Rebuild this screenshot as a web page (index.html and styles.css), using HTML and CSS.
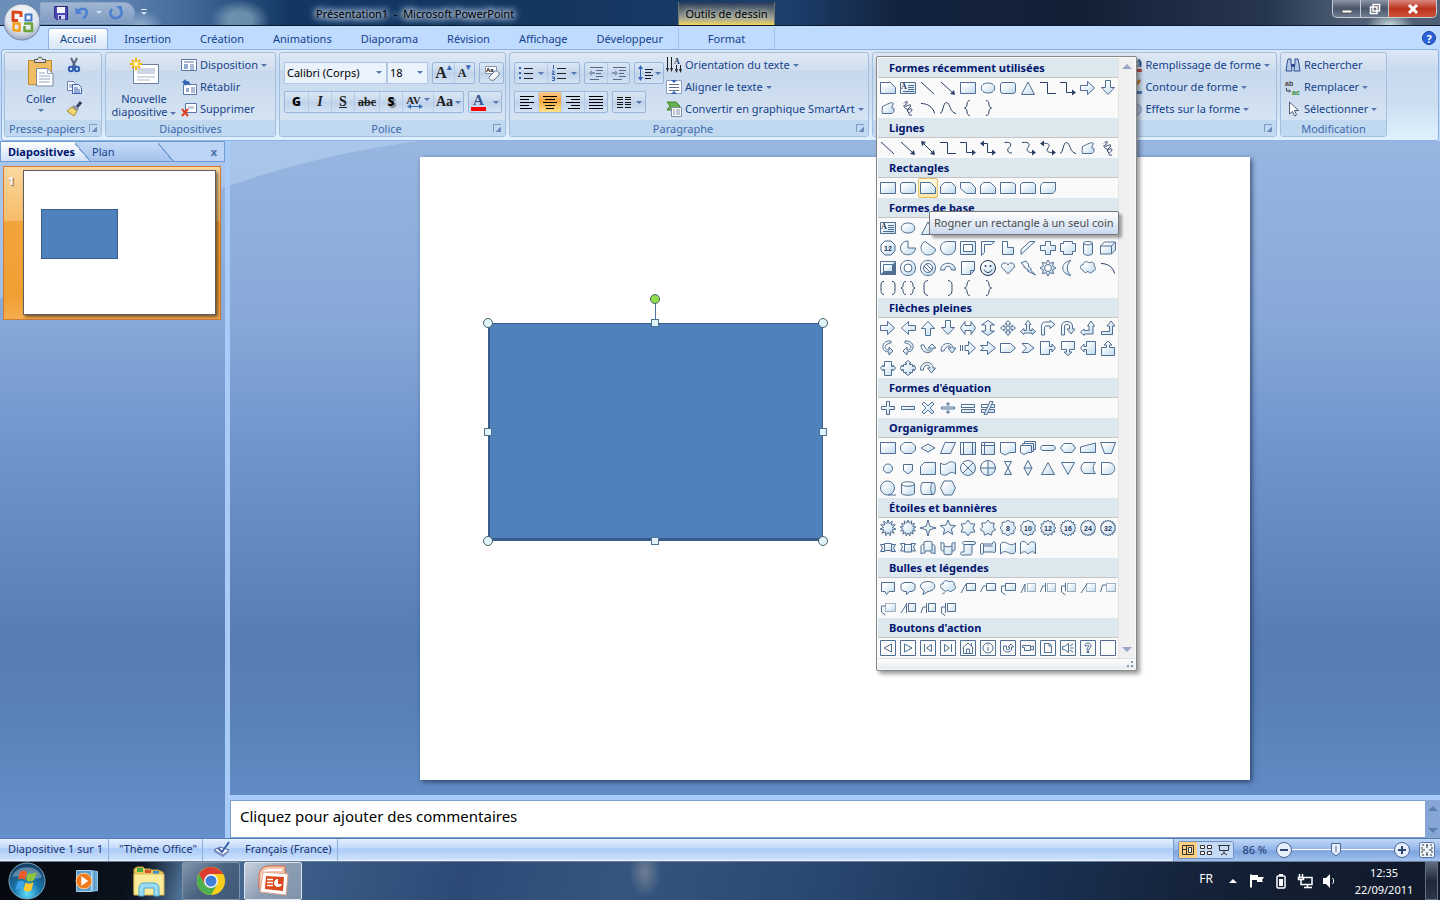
FILE: index.html
```html
<!DOCTYPE html>
<html lang="fr">
<head>
    <meta charset="UTF-8">
    <meta name="viewport" content="width=device-width, initial-scale=1.0">
    <title>Présentation1 - Microsoft PowerPoint</title>
    <link rel="stylesheet" href="styles.css">
</head>
<body>
    <header class="titlebar">
        <button class="office-button" aria-label="Bouton Office">
            <svg viewBox="0 0 38 38" width="38" height="38">
                <defs>
                    <radialGradient id="orb" cx=".5" cy=".35" r=".7">
                        <stop offset="0" stop-color="#fff"/><stop offset=".6" stop-color="#dfe5ee"/><stop offset="1" stop-color="#8d9db8"/>
                    </radialGradient>
                </defs>
                <circle cx="19" cy="19" r="18" fill="url(#orb)" stroke="#7388a8"/>
                <g fill="none" stroke-width="3" stroke-linejoin="round">
                    <path d="M18 14V9.500L10 9v8.500h5" stroke="#d9481c"/>
                    <path d="M22.500 11.500h6v6h-6z" stroke="#3f78c8" stroke-width="2"/>
                    <path d="M10.500 20.500h6V28l-6-1z" stroke="#f2a11f" stroke-width="2.500"/>
                    <path d="M21 20.500h8v7.500h-7.500v-5" stroke="#6aa53a" stroke-width="2.500"/>
                </g>
            </svg>
        </button>
        <div class="quick-access">
            <button aria-label="Enregistrer"><svg viewBox="0 0 16 16" width="16" height="16"><path d="M1.500 1.500h13v13h-11l-2-2z" fill="#4b49b8" stroke="#2b2a80"/><path d="M4 2h8v6H4z" fill="#f4f6ff"/><path d="M5 10h7v4.500H5z" fill="#d0d4ee"/><path d="M6 11h2v3H6z" fill="#2b2a80"/></svg></button>
            <button aria-label="Annuler"><svg viewBox="0 0 16 16" width="16" height="16"><path d="M4 6c5-4 10-2 8.500 3-.5 2-2 3.500-3.500 4.500" fill="none" stroke="#4b7fd0" stroke-width="2.500"/><path d="M1.500 2v7h7z" fill="#4b7fd0"/></svg></button>
            <i class="caret light"></i>
            <button aria-label="Répéter"><svg viewBox="0 0 16 16" width="16" height="16"><path d="M4 4c-4 5 0 10 5 9 5-1 6-6 3-9" fill="none" stroke="#4b7fd0" stroke-width="2.500"/><path d="M8 1h6v6z" fill="#4b7fd0"/></svg></button>
        </div>
        <button class="qa-more" aria-label="Personnaliser"><i class="caret light barred"></i></button>
        <h1 class="window-title">Présentation1 &nbsp;- &nbsp;Microsoft PowerPoint</h1>
        <span class="context-title">Outils de dessin</span>
        <div class="window-buttons">
            <button aria-label="Réduire"><svg viewBox="0 0 12 12" width="12" height="12"><path d="M1 7h10v3H1z" fill="#fff" stroke="#555"/></svg></button>
            <button aria-label="Restaurer"><svg viewBox="0 0 12 12" width="12" height="12"><path d="M4 1.500h6.500V8H4zM1.500 4H8v6.500H1.500z" fill="#667" stroke="#fff" stroke-width="1.500"/></svg></button>
            <button class="close" aria-label="Fermer"><svg viewBox="0 0 12 12" width="12" height="12"><path d="M2 2l8 8M10 2l-8 8" stroke="#fff" stroke-width="3"/></svg></button>
        </div>
    </header>

    <nav class="tabs" aria-label="Ruban">
        <button class="tab active">Accueil</button>
        <button class="tab">Insertion</button>
        <button class="tab">Création</button>
        <button class="tab">Animations</button>
        <button class="tab">Diaporama</button>
        <button class="tab">Révision</button>
        <button class="tab">Affichage</button>
        <button class="tab">Développeur</button>
        <button class="tab contextual">Format</button>
        <button class="help" aria-label="Aide">?</button>
    </nav>

    <section class="ribbon">
        <div class="group clipboard">
            <div class="group-body">
                <button class="big">
                    <svg viewBox="0 0 28 32" width="28" height="32"><path d="M1.500 4.500h23v24h-23z" fill="#f0bd62" stroke="#c08a35"/><path d="M7.500 6.500v-3h3c0-3 5-3 5 0h3v3z" fill="#ddd" stroke="#555"/><path d="M9.500 12.500h11l5.500 5v12.500H9.500z" fill="#fff" stroke="#7c8aa0"/><path d="M20.500 12.500v5H26M12 17h6M12 20h11M12 23h11M12 26h11" fill="none" stroke="#93a4c4"/></svg>
                    <span>Coller</span>
                    <i class="caret"></i>
                </button>
                <div class="stack">
                    <button aria-label="Couper"><svg viewBox="0 0 16 16" width="16" height="16"><path d="M5 1l4.500 9M11 1L6.500 10" stroke="#54657f" stroke-width="2"/><circle cx="5" cy="12" r="2.200" fill="none" stroke="#2f5fb5" stroke-width="2"/><circle cx="11" cy="12" r="2.200" fill="none" stroke="#2f5fb5" stroke-width="2"/></svg></button>
                    <button aria-label="Copier"><svg viewBox="0 0 16 16" width="16" height="16"><path d="M1.500 2.500h6l2 2v7h-8z" fill="#fff" stroke="#6d83b3"/><path d="M3 6h5M3 8h5" stroke="#6d83b3"/><path d="M6.500 5.500h6l3 3v6h-9z" fill="#eef4ff" stroke="#3e62ad"/><path d="M8 9h4M8 11h6M8 13h6" stroke="#3e62ad"/></svg></button>
                    <button aria-label="Reproduire la mise en forme"><svg viewBox="0 0 16 16" width="16" height="16"><path d="M15 1l-4 5" stroke="#38466b" stroke-width="3"/><path d="M8 4l5 4-2 2-5-4z" fill="#8a90b0"/><path d="M6 6l5 4-3 5-7-5z" fill="#f1d873" stroke="#a98a2c"/></svg></button>
                </div>
            </div>
            <footer><span>Presse-papiers</span><button class="launcher" aria-label="Plus"></button></footer>
        </div>

        <div class="group slides">
            <div class="group-body">
                <button class="big">
                    <svg viewBox="0 0 32 32" width="32" height="32"><path d="M5.500 8.500h25v19h-25z" fill="#fff" stroke="#6d7f9e"/><path d="M9 12h18v6H9z" fill="#ccd5e5"/><path d="M9 21h18M9 24h13" stroke="#a9b6cd"/><path d="M8 2v12M2 8h12M4 4l8 8M12 4l-8 8" stroke="#f6b30e" stroke-width="2"/><circle cx="8" cy="8" r="2.500" fill="#fff6b0"/></svg>
                    <span>Nouvelle<br>diapositive <i class="caret"></i></span>
                </button>
                <div class="stack">
                    <button><svg viewBox="0 0 16 16" width="16" height="16"><path d="M.5 2.500h15v11H.5z" fill="#fff" stroke="#5a77a8"/><path d="M3 5h10" stroke="#5a77a8"/><path d="M3 7h4v5H3z" fill="#93abcf"/><path d="M9 8h4M9 10h4M9 12h4" stroke="#5a77a8"/></svg>Disposition <i class="caret"></i></button>
                    <button><svg viewBox="0 0 16 16" width="16" height="16"><path d="M2.500 5.500h13v10h-13z" fill="#fff" stroke="#5a77a8"/><path d="M5 9h3v4H5z" fill="#93abcf"/><path d="M10 9h4M10 11h4M10 13h4" stroke="#5a77a8"/><path d="M1 3l4-3v2c4 0 4 2 4 5-1-2-2-2-4-2v2z" fill="#2f62b8"/></svg>Rétablir</button>
                    <button><svg viewBox="0 0 16 16" width="16" height="16"><path d="M4.500 2.500h11v9h-11z" fill="#fff" stroke="#5a77a8"/><path d="M7 5h6v3H7z" fill="#c0cde3"/><path d="M1 8l6 7M7 8l-6 7" stroke="#e0401c" stroke-width="2"/></svg>Supprimer</button>
                </div>
            </div>
            <footer><span>Diapositives</span></footer>
        </div>

        <div class="group font">
            <div class="group-body rows">
                <div class="row">
                    <div class="combo">
                        <select class="font-name" aria-label="Police"><option>Calibri (Corps)</option></select>
                        <select class="font-size" aria-label="Taille"><option>18</option></select>
                    </div>
                    <div class="cluster">
                        <button class="serif grow" aria-label="Agrandir">A<sup>▴</sup></button>
                        <button class="serif shrink" aria-label="Réduire la police">A<sup>▾</sup></button>
                    </div>
                    <div class="cluster">
                        <button aria-label="Effacer la mise en forme"><svg viewBox="0 0 18 18" width="18" height="18"><path d="M2.500 2.500h11v7h-11z" fill="#fff" stroke="#8795ad"/><text x="3" y="8" class="tiny">Aa</text><path d="M6 13l6-6c2-1 5 2 4 4l-5 5c-3 1-5-1-5-3z" fill="#f3f5fa" stroke="#66748f"/></svg></button>
                    </div>
                </div>
                <div class="row">
                    <div class="cluster">
                        <button class="b">G</button>
                        <button class="serif i">I</button>
                        <button class="serif u">S</button>
                        <button class="serif strike">abc</button>
                        <button class="shadow">S</button>
                        <button class="serif spacing">AV<i class="caret"></i><svg viewBox="0 0 16 5" width="16" height="5"><path d="M0 2.500L4 0v2h8V0l4 2.500L12 5V3H4v2z" fill="#3c6bb5"/></svg></button>
                        <button class="serif case">Aa<i class="caret"></i></button>
                    </div>
                    <div class="cluster">
                        <button class="serif color"><span>A</span><i class="caret"></i></button>
                    </div>
                </div>
            </div>
            <footer><span>Police</span><button class="launcher" aria-label="Plus"></button></footer>
        </div>

        <div class="group paragraph">
            <div class="group-body">
                <div class="rows">
                    <div class="row">
                        <div class="cluster wide">
                            <button aria-label="Puces"><svg viewBox="0 0 16 16" width="16" height="16"><path d="M1 2h2v2H1zM1 7h2v2H1zM1 12h2v2H1z" fill="#2f5fae"/><path d="M6 3.500h9M6 8.500h9M6 13.500h9" stroke="#222"/></svg><i class="caret"></i></button>
                            <button aria-label="Numérotation"><svg viewBox="0 0 16 16" width="16" height="16"><path d="M2.500 0v4M1 6h2v2H1.500v1.500H4M1 12h2.500v3.500H1M1.500 13.500h2" fill="none" stroke="#2f5fae"/><path d="M6 3.500h9M6 8.500h9M6 13.500h9" stroke="#222"/></svg><i class="caret"></i></button>
                        </div>
                        <div class="cluster muted">
                            <button aria-label="Réduire le retrait"><svg viewBox="0 0 16 16" width="16" height="16"><path d="M2 2.500h13M8 5.500h7M8 8.500h5M8 11.500h7M2 14.500h9" stroke="#596a85"/><path d="M1 8l3-3v2h3v2H4v2z" fill="#8597b5"/></svg></button>
                            <button aria-label="Augmenter le retrait"><svg viewBox="0 0 16 16" width="16" height="16"><path d="M2 2.500h13M8 5.500h7M8 8.500h5M8 11.500h7M2 14.500h9" stroke="#596a85"/><path d="M7 8L4 5v2H1v2h3v2z" fill="#8597b5"/></svg></button>
                        </div>
                        <div class="cluster wide">
                            <button class="line-spacing" aria-label="Interligne"><svg viewBox="0 0 16 16" width="16" height="16"><path d="M3.500 0L6 4H4v8h2l-2.500 4L1 12h2V4H1z" fill="#3566b5"/><path d="M8 4.500h8M8 7.500h6M8 10.500h8M8 13.500h6" stroke="#222"/></svg><i class="caret"></i></button>
                        </div>
                    </div>
                    <div class="row">
                        <div class="cluster">
                            <button aria-label="Gauche"><svg viewBox="0 0 16 16" width="16" height="16"><path d="M1 2.500h14M1 5.500h9M1 8.500h14M1 11.500h9M1 14.500h12" stroke="#000"/></svg></button>
                            <button class="pressed" aria-label="Centrer"><svg viewBox="0 0 16 16" width="16" height="16"><path d="M1 2.500h14M3 5.500h10M1 8.500h14M3 11.500h10M4 14.500h8" stroke="#000"/></svg></button>
                            <button aria-label="Droite"><svg viewBox="0 0 16 16" width="16" height="16"><path d="M1 2.500h14M6 5.500h9M1 8.500h14M6 11.500h9M3 14.500h12" stroke="#000"/></svg></button>
                            <button aria-label="Justifier"><svg viewBox="0 0 16 16" width="16" height="16"><path d="M1 2.500h14M1 5.500h14M1 8.500h14M1 11.500h14M1 14.500h14" stroke="#000"/></svg></button>
                        </div>
                        <div class="cluster wide">
                            <button aria-label="Colonnes"><svg viewBox="0 0 16 16" width="16" height="16"><path d="M1 3.500h6M9 3.500h6M1 5.500h6M9 5.500h6M1 8.500h6M9 8.500h6M1 10.500h6M9 10.500h6M1 13.500h6M9 13.500h6" stroke="#111"/></svg><i class="caret"></i></button>
                        </div>
                    </div>
                </div>
                <div class="stack">
                    <button><svg viewBox="0 0 16 16" width="16" height="16"><path d="M1.500 0v12M5.500 0v12M10.500 8v6M14.500 8v6" stroke="#222"/><path d="M0 11h3l-1.500 4zM4 11h3l-1.500 4zM9 12h3l-1.500 4zM13 12h3l-1.500 4z" fill="#222"/><text x="8" y="7" class="glyph">A</text></svg>Orientation du texte <i class="caret"></i></button>
                    <button><svg viewBox="0 0 16 16" width="16" height="16"><path d="M.5 1.500h15v13H.5z" fill="#fff" stroke="#8da2c8"/><path d="M3 5.500h10M3 8.500h10M3 11.500h10" stroke="#5c6d8c"/><path d="M8 4L5 1h6zM8 12l-3 3h6z" fill="#3566b5"/></svg>Aligner le texte <i class="caret"></i></button>
                    <button><svg viewBox="0 0 16 16" width="16" height="16"><path d="M1 1h9l4 4-3 4H1l3-4z" fill="#63b04c" stroke="#40822f"/><path d="M5.500 6.500h10v9h-10z" fill="#fff" stroke="#7d8da8"/><path d="M7 9h2M10 9h4M7 11h2M10 11h4M7 13h2M10 13h4" stroke="#7d8da8"/></svg>Convertir en graphique SmartArt <i class="caret"></i></button>
                </div>
            </div>
            <footer><span>Paragraphe</span><button class="launcher" aria-label="Plus"></button></footer>
        </div>

        <div class="group drawing">
            <div class="group-body">
                <div class="stack">
                    <button><svg viewBox="0 0 16 16" width="16" height="16"><path d="M3 6l5-4 6 5-6 4z" fill="#dfe8f5" stroke="#3d5d96"/><path d="M12 3c3 1 3 4 2 7" fill="none" stroke="#3d5d96" stroke-width="2"/><path d="M0 12h16v3H0z" fill="#c0504d"/></svg>Remplissage de forme <i class="caret"></i></button>
                    <button><svg viewBox="0 0 16 16" width="16" height="16"><path d="M14 1L6 10" stroke="#c77c3c" stroke-width="3"/><path d="M0 12h16v3H0z" fill="#4f81bd"/></svg>Contour de forme <i class="caret"></i></button>
                    <button><svg viewBox="0 0 16 16" width="16" height="16"><path d="M3 3h9l3 3v5l-3 3H6l-3-3z" fill="#b9c8e2" stroke="#7f95be"/></svg>Effets sur la forme <i class="caret"></i></button>
                </div>
            </div>
            <footer><span></span><button class="launcher" aria-label="Plus"></button></footer>

            <div class="gallery" role="menu" aria-label="Formes">
                <div class="gallery-main">
                    <div class="gallery-list" id="galleryList"></div>
                    <div class="gallery-scroll"><i class="up"></i><i class="down"></i></div>
                </div>
                <div class="gallery-grip">
                    <svg viewBox="0 0 8 8" width="8" height="8"><path d="M5 1h2v2H5zM1 5h2v2H1zM5 5h2v2H5z" fill="#8a97a8"/></svg>
                </div>
            </div>
            <div class="tooltip" role="tooltip">Rogner un rectangle à un seul coin</div>
        </div>

        <div class="group editing">
            <div class="group-body">
                <div class="stack">
                    <button><svg viewBox="0 0 16 16" width="16" height="16"><path d="M3 2h3v3l1 9H1l1-7zM10 2h3l1 5 1 7H9l1-9z" fill="#b5c8ea" stroke="#2c4f8f"/><path d="M6 7h4v3H6z" fill="#2c4f8f"/></svg>Rechercher</button>
                    <button><svg class="replace-icon" viewBox="0 0 16 16" width="16" height="16"><text x="0" y="7" class="swap">ab</text><text x="7" y="16" class="swap green">ac</text><path d="M1.500 9v3H5M4 10.500L5.500 12 4 13.500" fill="none" stroke="#345"/></svg>Remplacer <i class="caret"></i></button>
                    <button><svg viewBox="0 0 16 16" width="16" height="16"><path d="M4.500 1v12l3-2.500 2 4.500 2-1-2-4.500h4z" fill="#fff" stroke="#4b5a78"/></svg>Sélectionner <i class="caret"></i></button>
                </div>
            </div>
            <footer><span>Modification</span></footer>
        </div>
    </section>

    <main class="workspace">
        <svg class="swoosh" viewBox="0 0 420 160" width="420" height="160"><path d="M0 0H420Q200 28 0 158Z"/></svg>
        <aside class="outline">
            <div class="outline-tabs">
                <button class="outline-tab current">Diapositives</button>
                <button class="outline-tab">Plan</button>
                <button class="outline-close" aria-label="Fermer le volet">x</button>
            </div>
            <div class="thumb">
                <span class="thumb-number">1</span>
                <div class="thumb-slide"><div class="thumb-shape"></div></div>
            </div>
        </aside>
        <div class="editor">
            <div class="canvas">
                <div class="slide">
                    <div class="selection">
                        <span class="stem"></span>
                        <span class="handle rotate"></span>
                        <span class="handle round nw"></span>
                        <span class="handle north"></span>
                        <span class="handle round ne"></span>
                        <span class="handle west"></span>
                        <span class="handle east"></span>
                        <span class="handle round sw"></span>
                        <span class="handle south"></span>
                        <span class="handle round se"></span>
                    </div>
                </div>
            </div>
            <div class="notes">
                <textarea aria-label="Commentaires" rows="1">Cliquez pour ajouter des commentaires</textarea>
                <div class="notes-scroll"><i class="up"></i><i class="down"></i></div>
            </div>
        </div>
    </main>

    <footer class="statusbar">
        <span class="status-item">Diapositive 1 sur 1</span>
        <span class="status-item">"Thème Office"</span>
        <span class="status-item language">
            <svg viewBox="0 0 18 16" width="18" height="16"><path d="M1 9l6-3 9 3-6 5z" fill="#fff" stroke="#4a63a0"/><path d="M1 9v2l9 5 6-5V9l-6 5z" fill="#7f95c8"/><path d="M5 7l4 4 7-10" fill="none" stroke="#3c5fae" stroke-width="2"/></svg>
            Français (France)
        </span>
        <div class="view-tools">
            <div class="views">
                <button class="pressed" aria-label="Normal"><svg viewBox="0 0 12 12" width="12" height="12"><path d="M.5 1.500h11v9H.5zM4.500 1.500v9M.5 5.500h4" fill="none" stroke="#333"/><path d="M6.500 3.500h3v5h-3z" fill="#fff" stroke="#333"/></svg></button>
                <button aria-label="Trieuse"><svg viewBox="0 0 12 12" width="12" height="12"><path d="M.5 1.500h4v3h-4zM7.500 1.500h4v3h-4zM.5 7.500h4v3h-4zM7.500 7.500h4v3h-4z" fill="#fff" stroke="#333"/></svg></button>
                <button aria-label="Diaporama"><svg viewBox="0 0 12 12" width="12" height="12"><path d="M0 1.500h12M1.500 2v4.500h9V2M6 7v3M3 11l3-2 3 2" fill="none" stroke="#333"/></svg></button>
            </div>
            <button class="zoom-value">86 %</button>
            <button class="round-btn" aria-label="Zoom arrière"><svg viewBox="0 0 16 16" width="16" height="16"><circle cx="8" cy="8" r="7.500" fill="#e6effb" stroke="#4c6594"/><path d="M4 8h8" stroke="#2c4574" stroke-width="2"/></svg></button>
            <input class="zoom-range" type="range" min="0" max="100" value="42" aria-label="Zoom">
            <button class="round-btn" aria-label="Zoom avant"><svg viewBox="0 0 16 16" width="16" height="16"><circle cx="8" cy="8" r="7.500" fill="#e6effb" stroke="#4c6594"/><path d="M4 8h8M8 4v8" stroke="#2c4574" stroke-width="2"/></svg></button>
            <button class="fit" aria-label="Ajuster"><svg viewBox="0 0 16 16" width="16" height="16"><rect x=".5" y=".5" width="15" height="15" rx="2" fill="#eef4fc" stroke="#5975a5"/><path d="M3 3h10v10H3z" fill="none" stroke="#333" stroke-dasharray="2 2"/><path d="M8 3v3M8 10v3M3 8h3M10 8h3" stroke="#333"/></svg></button>
        </div>
    </footer>

    <footer class="taskbar">
        <button class="start" aria-label="Démarrer">
            <svg viewBox="0 0 38 38" width="38" height="38">
                <defs><radialGradient id="start" cx=".5" cy=".85" r=".8"><stop offset="0" stop-color="#5fe0ff"/><stop offset=".45" stop-color="#1b78ad"/><stop offset="1" stop-color="#143f66"/></radialGradient></defs>
                <circle cx="19" cy="19" r="18" fill="url(#start)" stroke="#7fa9c2"/>
                <path d="M4 15C8 2 30 2 34 15 25 20 13 12 4 15z" fill="#fff" opacity=".3"/>
                <path d="M12 10c3-2 5-1 7 0l-2 8c-2-1-4-2-7 0z" fill="#f0592a"/>
                <path d="M20 11c3 1 5 1 9-1l-3 8c-3 2-5 2-8 0z" fill="#8cc63f"/>
                <path d="M9.500 20c3-2 5-1 7 0l-2 8c-2-1-4-2-7 0z" fill="#3fa3e8"/>
                <path d="M17.500 20.500c3 2 5 1 8-.5l-2 8c-3 2-5 2-8 0z" fill="#fdc72d"/>
            </svg>
        </button>
        <button class="task" aria-label="Lecteur Windows Media"><svg viewBox="0 0 32 32" width="28" height="28"><path d="M10 4l18 1v22l-18 1z" fill="#6ba9d3" stroke="#a8d6f0"/><path d="M7 4h17v24H7z" fill="#8fc4e6" stroke="#4f88b3"/><path d="M4 4h17v24H4z" fill="#5e9dca" stroke="#b8dff5"/><circle cx="12.500" cy="16" r="9" fill="#ee7a1c" stroke="#ffd9a8"/><path d="M9.500 10.500v11l8-5.500z" fill="#fff"/></svg></button>
        <button class="task" aria-label="Explorateur"><svg viewBox="0 0 32 32" width="32" height="32"><path d="M1 4l3-2h6l2 2h5l2 1h6l5 2v22H1z" fill="#e9c95c" stroke="#b8962f"/><path d="M4 3h6v4H4z" fill="#48a844"/><path d="M12 5h6v3h-6z" fill="#d94f31"/><path d="M20 6h6v3h-6z" fill="#3c8dd0"/><path d="M1 9h30v21H1z" fill="#fbeb9c" stroke="#d8bb57"/><path d="M6 31v-8c0-4 3-5 5-5h10c3 0 5 2 5 5v8h-5v-8H11v8z" fill="#9cdcf2" stroke="#4aa8cf"/></svg></button>
        <button class="task open" aria-label="Google Chrome">
            <svg viewBox="0 0 32 32" width="32" height="32"><circle cx="16" cy="16" r="14" fill="#f9cf1c"/><path d="M16 9h12.100A14 14 0 0 0 3.900 9l6 10.500z" fill="#dd3d31"/><path d="M3.900 9A14 14 0 0 0 16 30l6-10.500-12 0z" fill="#4caf50"/><circle cx="16" cy="16" r="7" fill="#f4f4f4"/><circle cx="16" cy="16" r="5.500" fill="#3f7fd8"/></svg>
        </button>
        <button class="task open active" aria-label="PowerPoint">
            <svg viewBox="0 0 32 32" width="32" height="32"><path d="M2 12C2 5 6 1 12 1h16v22H2z" fill="#f3c9b4" stroke="#d9663a"/><path d="M5 13c0-5 3-8 8-8h12" fill="none" stroke="#fff" stroke-width="2"/><path d="M6 7l25 2-2 21-26-3z" fill="#fff" stroke="#e0a58c"/><path d="M9 11l18 1-1 14-18-2z" fill="#d9481c"/><path d="M10 14.500h6M10 17.500h6M10 20.500h6" stroke="#fff" stroke-width="1.500"/><path d="M21 14a4 4 0 1 0 4 5h-4z" fill="#fff"/></svg>
        </button>
        <div class="tray">
            <span class="lang">FR</span>
            <button aria-label="Icônes cachées"><svg viewBox="0 0 16 16" width="16" height="16"><path d="M4 10l4-4 4 4z" fill="#fff"/></svg></button>
            <button aria-label="Centre de maintenance"><svg viewBox="0 0 16 16" width="16" height="16"><path d="M2 1.500v13" stroke="#fff" stroke-width="2"/><path d="M3 2h6v2h6l-2 3 1 2H8V7H3z" fill="#fff"/></svg></button>
            <button aria-label="Batterie"><svg viewBox="0 0 16 16" width="16" height="16"><path d="M6 1h4v2H6z" fill="#fff"/><rect x="4" y="3" width="8" height="12" rx="1" fill="none" stroke="#fff" stroke-width="1.500"/><path d="M6 6h4v7H6z" fill="#fff"/></svg></button>
            <button aria-label="Réseau"><svg viewBox="0 0 16 16" width="16" height="16"><path d="M6 4.500h9v7H4V8M7 14.500h8M10.500 12v2M2.500 1v3M5.500 1v3M1.500 4.500h5v2h-5zM4 7v4" fill="none" stroke="#fff" stroke-width="1.500"/></svg></button>
            <button aria-label="Volume"><svg viewBox="0 0 16 16" width="16" height="16"><path d="M2 5h3l4-4v14l-4-4H2z" fill="#fff"/><path d="M11.500 5c1.500 2 1.500 4 0 6" fill="none" stroke="#fff"/></svg></button>
        </div>
        <time class="clock">12:35<br>22/09/2011</time>
        <button class="show-desktop" aria-label="Afficher le bureau"></button>
    </footer>

    <svg class="defs" width="0" height="0" aria-hidden="true">
        <defs>
            <linearGradient id="shapeFill" x1="0" y1="0" x2="1" y2="1">
                <stop offset=".2" stop-color="#fff"/><stop offset="1" stop-color="#bdd9ec"/>
            </linearGradient>
        </defs>
    </svg>
    <script src="script.js"></script>
</body>
</html>
```
FILE: script.js
```js
// filled outline, open line, thin inner line, arrow head
const f = d => `<path class="f" d="${d}"/>`;
const l = d => `<path class="l" d="${d}"/>`;
const o = d => `<path class="o" d="${d}"/>`;
const h = d => `<path class="h" d="${d}"/>`;
const dots = d => `<path class="f dots" d="${d}"/>`;
const label = t => `<text class="num" x="8" y="10.500">${t}</text>`;
const frame = inner => '<path class="w" d="M.5.5h15v15H.5z"/>' + inner;

function star(points, outer, inner, text) {
    let d = '';
    for (let i = 0; i < points * 2; i++) {
        const r = i % 2 ? inner : outer;
        const a = Math.PI * i / points - Math.PI / 2;
        d += (i ? 'L' : 'M') + (8 + r * Math.cos(a)).toFixed(2) + ' ' + (8 + r * Math.sin(a)).toFixed(2);
    }
    return f(d + 'z') + (text ? label(text) : '');
}

const shapes = {
    text: f('M.5 2.500h15v11H.5z') + '<text class="glyph" x="1" y="9">A</text>' + o('M8 5.500h6M8 7.500h6M8 9.500h6M3 11.500h11'),
    line: l('M1 2l13 12'),
    arrow: l('M1 2l12 11') + h('M15 15l-5-1 4-4z'),
    doubleArrow: l('M3 3l10 10') + h('M15 15l-5-1 4-4zM1 1l5 1-4 4z'),
    rect: f('M.5 2.500h15v11H.5z'),
    oval: f('M8 3c9 0 9 10 0 10S-1 3 8 3z'),
    round: f('M3 2.500h10q2.500 0 2.500 2.500v6q0 2.500-2.500 2.500H3Q.5 13.500.5 11V5Q.5 2.500 3 2.500z'),
    altProcess: f('M4 2.500h8l3.500 3.500v4L12 13.500H4L.5 10V6z'),
    triangle: f('M8 2L14.500 14.500h-13z'),
    rightTriangle: f('M1.500 2v12.500h13z'),
    elbow: l('M0 2.500h7.500v11H16'),
    elbowArrow: l('M0 2.500h6.500v10H14') + h('M16 12.500l-4-3v6z'),
    elbowDouble: l('M2 3.500h5.500v9H14') + h('M16 12.500l-4-3v6zM0 3.500l4-3v6z'),
    curved: l('M4.500 2.500C13 1.500 11 6 9 7.500s-2 6 3 5.500'),
    curvedArrow: l('M2 2.500C10 1.500 10 5 8 7.500s-1 5.500 6 5') + h('M16 12.500l-4-3v6z'),
    curvedDouble: l('M3 3.500c7-1 7 2.500 5 4.500s-1 5 5 4.500') + h('M16 12.500l-4-3v6zM0 3.500l4-3v6z'),
    curve: l('M0 13.500c3 0 3-11 6.500-11S10 13 16 13.500'),
    freeform: f('M2.500 6.500l4-2 5-2 2 1-2 4 2.500 1v3l-2 2h-9.500l-.5-3z'),
    scribble: l('M4 3.500C8-1 8 3 5.500 5S8 6 9 5s3 0 0 3-1 2 1 1 3 1 0 3.500 1 3 2 2.500M4 5c0 4 2 3 3 4s0 3 2 4'),
    arc: l('M1 3.500c6 0 12 3 13.500 10'),
    leftBrace: l('M10 .5C5 1 9 7 4.500 8 9 9 5 15 10 15.500'),
    rightBrace: l('M6 .5c5 .5 1 6.500 5.500 7.500C7 9 11 15 6 15.500'),
    leftBracket: l('M8 .5c-4 1-4 2-4 7s0 7 4 8'),
    rightBracket: l('M8 .5c4 1 4 2 4 7s0 7-4 8'),
    bracketPair: l('M4 1.500c-3 0-3 2-3 6s0 7 3 7M12 1.500c3 0 3 2 3 6s0 7-3 7'),
    bracePair: l('M6 1.500C1 2 5 7 1 8c4 1 0 6 5 6.500M10 1.500C15 2 11 7 15 8c-4 1 0 6-5 6.500'),
    snip1: f('M.5 2.500h10l5 5v6H.5z'),
    snip2: f('M4.500 2.500h7l4 4v7H.5v-7z'),
    snipDiag: f('M.5 2.500h10l5 5v6h-9l-6-5z'),
    snipRound: f('M3.500 2.500h7l5 5v6H.5v-8z'),
    round1: f('M.5 2.500h12l3 2v9H.5z'),
    round2: f('M3 2.500h10l2.500 2v9H.5v-9z'),
    roundDiag: f('M3 2.500h12.500v8l-2.500 3H.5v-8z'),
    parallelogram: f('M5 2.500h10.500l-5 11H.5z'),
    trapezoid: f('M4.500 2.500h7l4 11H.5z'),
    diamond: f('M8 1l7 7-7 7-7-7z'),
    pentagon: f('M8 1l7 5-3 8.500H4L1 6z'),
    hexagon: f('M4 2.500h8L15.500 8 12 13.500H4L.5 8z'),
    heptagon: f('M8 1l5 2 2 6-4 5.500H5L1 9l2-6z'),
    octagon: f('M5 1.500h6L14.500 5v6L11 14.500H5L1.500 11V5z'),
    dodecagon: f('M5 1h6l4 4v6l-4 4H5l-4-4V5z') + label('12'),
    pie: f('M8 1v7h7.500C15 17 .5 17 .5 8 .5 4 4 1 8 1z'),
    chord: f('M5 1.500L15.500 9c0 4-4 6-7.500 6C1 15-2 5 5 1.500z'),
    teardrop: f('M8 1.500h7.500V8c0 9-15 9-15 0 0-4 3-6.500 7.500-6.500z'),
    frame: f('M.5 1.500h15v13H.5z') + '<path class="w" d="M3.500 4.500h9v7h-9z"/>',
    halfFrame: f('M1.500 1.500h13l-3 3h-7v8l-3 3z'),
    lShape: f('M2.500 1.500h5v6h6v7h-11z'),
    stripe: f('M10 1.500h5l-14 13v-5z'),
    cross: f('M5.500 1.500h5v4h5v5h-5v4h-5v-4h-5v-5h5z'),
    plaque: f('M3.500 1.500h9v2h3v8h-3v3h-9v-3h-3v-8h3z'),
    can: f('M3.500 3c0-2 9-2 9 0v10c0 3-9 3-9 0z') + o('M3.500 3c0 2.500 9 2.500 9 0'),
    cube: f('M.5 6l4-4h11v8l-4 4H.5z') + o('M.5 6h11v8M11.500 6l4-4'),
    bevel: '<path d="M.5 1.500h15v13H.5z" class="f"/><path d="M15.500 1.500v13H.5l3-3h9v-7z" fill="#526e90"/>' + f('M3.500 4.500h9v7h-9z'),
    donut: f('M8 .5c10 0 10 15 0 15S-2 .5 8 .5z') + '<circle class="w" cx="8" cy="8" r="4"/>',
    no: f('M8 .5c10 0 10 15 0 15S-2 .5 8 .5z') + '<circle class="w" cx="8" cy="8" r="4.500"/>' + o('M4 6l6 6M6 4l6 6'),
    blockArc: f('M.5 10C1 1 15 1 15.500 10h-4C11 5 5 5 4.500 10z'),
    fold: f('M1.500 1.500h13v9l-4 4h-9z') + o('M14 10.500h-3.500v4'),
    smiley: '<circle class="f dark" cx="8" cy="8" r="7.500"/><circle cx="5.500" cy="6" r="1" class="h"/><circle cx="10.500" cy="6" r="1" class="h"/>' + l('M4 9.500c2 4 6 4 8 0'),
    heart: f('M8 14L1.500 7C1 2 7 2 8 5c1-3 7-3 6.500 2z'),
    lightning: f('M1 3l5-2 3 4-1 1 3.500 3-1 1 5 5-8-4 1-1-5-3 1-1z'),
    sun: star(8, 8, 5) + '<circle class="w" cx="8" cy="8" r="3.500"/>',
    moon: f('M11 .5C0 2 0 14 11 15.500 6 12 6 4 11 .5z'),
    cloud: f('M3 10C-1 9 0 4 3 5c0-4 5-4 6-2 3-2 6 0 5 3 3 2 1 5-1 5-1 3-5 2-5 0-2 3-5 1-5-1z'),
    right: f('M.5 5.500h7v-4L14.500 8l-7 6.500v-4h-7z'),
    left: f('M15.500 5.500h-7v-4L1.500 8l7 6.500v-4h7z'),
    up: f('M5.500 15.500v-7h-4L8 1.500l6.500 7h-4v7z'),
    down: f('M5.500.5v7h-4L8 14.500l6.500-7h-4v-7z'),
    leftRight: f('M.5 8L5 1.500v4h6v-4L15.500 8 11 14.500v-4H5v4z'),
    upDown: f('M8 .5L14.500 5h-4v6h4L8 15.500 1.500 11h4V5h-4z'),
    quad: f('M8 .5l3 3.500H9v3h3V5l3.500 3-3.500 3V9H9v3h2l-3 3.500L5 12h2V9H4v2L.5 8 4 5v2h3V4H5z'),
    leftRightUp: f('M8 .5l3 4H9.500v6H12V8.500l3.500 3-3.500 3V13H4v1.500l-3.500-3 3.500-3v2h2.500v-6H5z'),
    bent: f('M1.500 15V6c0-3 2-4 4-4H10V.5l5 4-5 4V6H6c-1 0-1.500 1-1.500 2v7z'),
    uturn: f('M1.500 15V6c0-6 11-6 11 0v3H15l-4 5-4-5h2.500V6c0-2-5-2-5 0v9z'),
    leftUp: f('M11 1l3.500 5H13v8H4v1.500L.5 12 4 9v1.500h5V6H7.500z'),
    bentUp: f('M11 1l4 5h-2.500v8.500h-11v-3h8V6H7z'),
    curvedRight: f('M11 1C1 0 0 12 9 12v3l4-4-4-4v3C4 10 3 4 11 3z'),
    curvedLeft: f('M5 1c10-1 11 11 2 11v3l-4-4 4-4v3c5 0 6-6-2-7z'),
    curvedUp: f('M1 5c0 10 12 9 12 3h3l-4-4-4 4h3c0 3-5 4-7-3z'),
    curvedDown: f('M1 11c0-10 12-9 12-3h3l-4 5-4-5h3c0-3-5-3-7 3z'),
    striped: f('M5 5.500h3.500v-4L15.500 8l-7 6.500v-4H5z') + o('M.5 5v6M2.500 5v6'),
    notched: f('M.5 5.500h7v-4L15.500 8l-8 6.500v-4h-7L3.500 8z'),
    arrowPentagon: f('M.5 3.500h10L15.500 8l-5 4.500H.5z'),
    chevron: f('M2 3.500h6L14 8l-6 4.500H2L6.500 8z'),
    rightCallout: f('M.5 1.500h9v5H12V4l3.500 4-3.500 4V9.500H9.500v5h-9z'),
    downCallout: f('M1.500 1.500h13v8h-5V12H12l-4 3.500L4 12h2.500V9.500h-5z'),
    leftCallout: f('M15.500 1.500h-9v5H4V4L.5 8 4 12V9.500h2.500v5h9z'),
    upCallout: f('M1.500 15.500h13v-8h-5V5H12L8 1 4 5h2.500v2.500h-5z'),
    leftRightCallout: f('M4.500 1.500h7v5H13V5l2.500 3-2.500 3V9.500h-1.500v6h-7v-6H3V11L.5 8 3 5v1.500h1.500z'),
    quadCallout: f('M8 .5l3 2.500H9.500v1.500h3v2H14V5l2 3-2 3V9.500h-1.500v3h-3V13H11l-3 2.500L5 13h1.500v-.5h-3v-3H2V11L0 8l2-3v1.500h1.500v-2h3V3H5z'),
    circular: f('M.5 10C0 1 13 0 13 8h2.500L11.500 13l-4-5H10c-1-5-7-3-6.500 2z'),
    mathPlus: f('M6.500 1.500h3v5h5v3h-5v5h-3v-5h-5v-3h5z'),
    mathMinus: f('M1.500 6.500h13v3h-13z'),
    mathTimes: f('M4 2l4 4 4-4 2 2-4 4 4 4-2 2-4-4-4 4-2-2 4-4-4-4z'),
    mathDivide: f('M1.500 7h13v2h-13zM7 3h2v2H7zM7 11h2v2H7z'),
    mathEqual: f('M1.500 4.500h13v3h-13zM1.500 9.500h13v3h-13z'),
    mathNotEqual: f('M1.500 4.500h13v3h-13zM1.500 9.500h13v3h-13z') + f('M10 1.500h3l-6 13H4z'),
    decision: f('M8 4l7 4-7 4-7-4z'),
    predefined: f('M.5 2.500h15v12H.5z') + o('M3.500 3v12M12.500 3v12'),
    internal: f('M1.500 2.500h13v12h-13z') + o('M4.500 3v12M2 5.500h12'),
    document: f('M.5 2.500h15v10H10l-5 2.500-4.500-2.500z'),
    multiDocument: f('M4.500 1.500h11v8h-11z') + f('M2.500 3.500h11v8h-11z') + f('M.5 5.500h11v7H8l-4 2-3.500-2z'),
    terminator: f('M3 5.500h10c3 0 3 5 0 5H3c-3 0-3-5 0-5z'),
    preparation: f('M4 3.500h8L15.500 8 12 12.500H4L.5 8z'),
    manualInput: f('M.5 7l15-4v9.500H.5z'),
    manualOperation: f('M.5 2.500h15l-4 11h-7z'),
    connector: '<circle class="f" cx="8" cy="8.500" r="4.500"/>',
    offPage: f('M3.500 4.500h9v6L8 14l-4.500-3.500z'),
    card: f('M4.500 2.500h11v12H.5v-8z'),
    tape: f('M.5 3c2.500 2 5 2 7.500 0s5-1 7.500 0v11c-2.500-2-5-2-7.500 0s-5 1-7.500 0z'),
    summing: '<circle class="f" cx="8" cy="8" r="7.500"/>' + o('M3 3l10 10M13 3L3 13'),
    or: '<circle class="f" cx="8" cy="8" r="7.500"/>' + o('M.5 8h15M8 .5v15'),
    collate: f('M4.500 1.500h7L8 8l3.500 6.500h-7L8 8z'),
    sort: f('M8 .5L12 8l-4 7.500L4 8z') + o('M4 8h8'),
    extract: f('M8 2.500l6.500 12h-13z'),
    merge: f('M8 14.500l-6.500-12h13z'),
    storedData: f('M4 2.500h11.500c-3 3-3 8 0 11H4c-4-3-4-8 0-11z'),
    delay: f('M1.500 2.500H8c9 0 9 12 0 12H1.500z'),
    sequential: '<circle class="f" cx="7.500" cy="8" r="7"/>' + o('M8 15h8'),
    disk: f('M1.500 4c0-3 13-3 13 0v9c0 3-13 3-13 0z') + o('M1.500 4c0 3 13 3 13 0'),
    directAccess: f('M3 2.500h10c3 0 3 12 0 12H3c-3 0-3-12 0-12z') + o('M13 2.500c-3 0-3 12 0 12'),
    display: f('M4 1h8l3.500 7L12 15H4L.5 8z'),
    burst1: star(11, 8, 4.500),
    burst2: star(13, 8, 5),
    star4: star(4, 8, 2.500),
    star5: star(5, 8, 3.500),
    star6: star(6, 8, 5),
    star7: star(7, 8, 5.500),
    star8: star(8, 8, 6.500, '8'),
    star10: star(10, 8, 6.500, '10'),
    star12: star(12, 8, 6, '12'),
    star16: star(16, 8, 6.500, '16'),
    star24: star(18, 8, 6.500, '24'),
    star32: star(20, 8, 6.500, '32'),
    ribbonUp: f('M.5 4.500h4v-1h7v1h4L13.500 8l2 3.500H11v-1H5v1H.5l2-3.500z') + o('M4.500 4v6.500M11.500 4v6.500'),
    ribbonDown: f('M.5 3.500H5v1h6v-1h4.500l-2 3.500 2 4h-4v1h-7v-1h-4l2-4z') + o('M4.500 4v8M11.500 4v8'),
    curvedRibbonUp: f('M1 6c1-2 2-2 3-1V2c3-1 6-1 8 0v3c2-1 2 0 3 1v8c-1-1-2-1-4-1v-2H5v2c-2 0-3 0-4 1z') + o('M4 5v6M12 5v6'),
    curvedRibbonDown: f('M1 2c1 1 2 1 3 1v3c3 1 5 1 8 0V3c1 0 2 0 3-1v8c-1 1-2 1-3 1v3c-3 1-5 1-8 0v-3c-1 0-2 0-3-1z') + o('M4 6v5M12 6v5'),
    verticalScroll: f('M4 1.500h10c2 0 2 3 0 3h-2v8c0 2-1 2.500-2 2.500H2c-2 0-2-3 0-3h2V4c-2 0-2-2.500 0-2.500z') + o('M4 4.500h8'),
    horizontalScroll: f('M.5 5c0-2 2-2 3-1h9c0-3 3-3 3 0v7c0 2-2 2-3 1h-9c0 3-3 3-3 1z') + o('M3.500 4v8M3.500 6h9'),
    wave: f('M.5 4c5-6 9 5 15-1v9c-5 6-9-5-15 2z'),
    doubleWave: f('M.5 3c2-3 5-2 7.500 2 2-4 5-4 7.500-2v11c-2-3-4-3-7.500 0-2-3-5-3-7.500 0z'),
    rectCallout: f('M1.500 2.500h13v9H9L6.500 14.500 5 11.500H1.500z'),
    roundCallout: f('M4 2.500h8l3 2v5l-3 2H9.500l-3 3v-3H4l-3-2v-5z'),
    ovalCallout: f('M8 1.500c9 0 9 9 0 10l-5 3 1-4c-6-3-4-9 4-9z'),
    cloudCallout: f('M3 9C-1 8 0 3 3 4c0-4 5-4 6-2 3-2 6 0 5 3 3 2 1 5-1 5-1 2-4 2-5 0-2 2-5 1-5-1z') + o('M4 12v2M2 14h1'),
    line1: f('M6.500 3.500h9v7h-9z') + o('M1 13l5-9'),
    line2: f('M6.500 3.500h9v7h-9z') + o('M.5 12l3-6h3'),
    line3: f('M5.500 3.500h10v7h-10z') + o('M5.500 6h-4v6l4 3'),
    dotted1: dots('M7.500 3.500h8v8h-8z') + o('M1 13l4-9v8'),
    dotted2: dots('M7.500 3.500h8v8h-8z') + o('M.5 12l2-6h3M5.500 3v9'),
    dotted3: dots('M7.500 3.500h8v8h-8z') + o('M5.500 3v8M5.500 6h-4v6l4 3'),
    plain1: dots('M6.500 3.500h9v8h-9z') + o('M1 13l6-9'),
    plain2: dots('M6.500 3.500h9v8h-9z') + o('M.5 12l2-7h4'),
    plain3: dots('M5.500 3.500h10v8h-10z') + o('M5.500 6h-4v6l4 3'),
    accent1: f('M8.500 3.500h7v8h-7z') + o('M1 13l5-8M6.500 3v10'),
    accent2: f('M8.500 3.500h7v8h-7z') + o('M1 13l2-6h3M6.500 3v10'),
    accent3: f('M7.500 3.500h8v8h-8z') + o('M5.500 3v10M5.500 7h-4v6l4 3'),
    back: frame(o('M11.500 4v8L4 8z')),
    forward: frame(o('M4.500 4v8L12 8z')),
    begin: frame(o('M11.500 4.500v7L6.500 8zM4.500 4v8')),
    end: frame(o('M4.500 4.500v7l5-3.500zM11.500 4v8')),
    home: frame(o('M2.500 8L8 3l5.500 5M3.500 7.500v6h9v-6M6.500 13V9h3v4M11.500 6V3')),
    info: frame('<circle class="o" cx="8" cy="8" r="5"/>' + o('M8 7v4M8 4.500v1')),
    back2: frame(o('M3.500 6v3c0 4 8 4 8 0V7h2L11 4 8 7h1.500v2c0 1-3 1-3 0V6z')),
    movie: frame(o('M2.500 5.500h8v5h-6v-3h-2zM10.500 7l3-1v4l-3-1')),
    page: frame(o('M4.500 3.500h5l2 2v7h-7zM9 4v2h2')),
    sound: frame(o('M2.500 6.500h2l4-3v9l-4-3h-2zM10 6l3-2M10.500 8h3M10 10l3 2')),
    help: frame(o('M5 6c0-4 6-4 6 0 0 2-2 2-2 4H7c0-3 2-3 2-4s-2-1-2 0zM7 11.500h2v1H7z')),
    blank: frame('')
};

const sections = [
    ['Formes récemment utilisées', 'snip1 text line arrow rect oval round triangle elbow elbowArrow right down freeform scribble arc curve leftBrace rightBrace'],
    ['Lignes', 'line arrow doubleArrow elbow elbowArrow elbowDouble curved curvedArrow curvedDouble curve freeform scribble'],
    ['Rectangles', 'rect round snip1 snip2 snipDiag snipRound round1 round2 roundDiag'],
    ['Formes de base', 'text oval triangle rightTriangle parallelogram trapezoid diamond pentagon hexagon heptagon octagon octagon dodecagon pie chord teardrop frame halfFrame lShape stripe cross plaque can cube bevel donut no blockArc fold smiley heart lightning sun moon cloud arc bracketPair bracePair leftBracket rightBracket leftBrace rightBrace'],
    ['Flèches pleines', 'right left up down leftRight upDown quad leftRightUp bent uturn leftUp bentUp curvedRight curvedLeft curvedUp curvedDown striped notched arrowPentagon chevron rightCallout downCallout leftCallout upCallout leftRightCallout quadCallout circular'],
    ["Formes d'équation", 'mathPlus mathMinus mathTimes mathDivide mathEqual mathNotEqual'],
    ['Organigrammes', 'rect altProcess decision parallelogram predefined internal document multiDocument terminator preparation manualInput manualOperation connector offPage card tape summing or collate sort extract merge storedData delay sequential disk directAccess display'],
    ['Étoiles et bannières', 'burst1 burst2 star4 star5 star6 star7 star8 star10 star12 star16 star24 star32 ribbonUp ribbonDown curvedRibbonUp curvedRibbonDown verticalScroll horizontalScroll wave doubleWave'],
    ['Bulles et légendes', 'rectCallout roundCallout ovalCallout cloudCallout line1 line2 line3 dotted1 dotted2 dotted3 plain1 plain2 plain3 accent1 accent2 accent3'],
    ["Boutons d'action", 'back forward begin end home info back2 movie page sound help blank']
];

document.getElementById('galleryList').innerHTML = sections.map(([title, names]) => `
    <h2>${title}</h2>
    <div class="shape-grid">
        ${names.split(' ').map(name => {
            const hover = title === 'Rectangles' && name === 'snip1' ? ' hover' : '';
            return `<button class="shape${hover}" aria-label="${name}"><svg viewBox="0 0 16 16" width="16" height="16">${shapes[name]}</svg></button>`;
        }).join('')}
    </div>
`).join('');
```
FILE: styles.css
```css
* {
    box-sizing: border-box;
}

body {
    margin: 0;
    height: 100vh;
    display: flex;
    flex-direction: column;
    overflow: hidden;
    font-family: "Noto Sans", "Open Sans", sans-serif;
    font-size: 11px;
    line-height: 16px;
    color: #15428b;
    background-color: #bfdbff;
}

button {
    font: inherit;
    color: inherit;
    background: none;
    border: 0;
    padding: 0;
    white-space: nowrap;
}

svg {
    display: block;
    flex: none;
}

h1,
h2 {
    margin: 0;
    font-size: inherit;
    font-weight: normal;
}

.caret {
    display: inline-block;
    flex: none;
    border: 3px solid transparent;
    border-top-color: #5577ab;
    border-bottom: 0;
    vertical-align: middle;
}

.caret.light {
    border-top-color: #cfdcf0;
}

.caret.barred {
    position: relative;
}

.caret.barred::before {
    content: "";
    position: absolute;
    left: -3px;
    top: -6px;
    width: 6px;
    height: 1px;
    background-color: #dfe8f6;
}

/* Title bar */
.titlebar {
    position: relative;
    z-index: 3;
    flex: none;
    display: flex;
    align-items: center;
    height: 26px;
    padding-left: 40px;
    border-bottom: 1px solid #0d1a2e;
    background:
        radial-gradient(ellipse 30px 20px at 240px 20px, rgba(150, 185, 205, 0.6) 40%, transparent),
        radial-gradient(ellipse 24px 16px at 140px 26px, rgba(190, 215, 235, 0.6), transparent),
        radial-gradient(ellipse 24px 14px at 1390px 26px, rgba(220, 240, 235, 0.9), transparent),
        linear-gradient(90deg, #6c8fba 0, #5f83b0 8%, #3d6594 14%, #123763 20%, #14365f 40%, #1c3f6c 55%, #13233f 62%, #131f35 75%, #27364f 88%, #4f6076 94%, #4f6076 100%);
}

.office-button {
    position: absolute;
    left: 3px;
    top: 3px;
}

.quick-access {
    display: flex;
    align-items: center;
    gap: 5px;
    height: 22px;
    padding: 0 10px 0 12px;
    border: 1px solid #8ba6cb;
    border-radius: 0 12px 12px 0;
    background: linear-gradient(#a0b5d2, #7f9bc2);
}

.quick-access .caret {
    margin: 0 1px;
}

.qa-more {
    padding: 0 6px;
}

.window-title {
    position: absolute;
    left: 316px;
    top: 5px;
    line-height: 18px;
    color: #000;
    text-shadow: 0 0 5px #b5c6dc, 0 0 6px #b5c6dc, 0 0 8px #b5c6dc, 0 0 10px #b5c6dc, 0 0 10px #b5c6dc;
}

.context-title {
    position: absolute;
    left: 678px;
    top: 2px;
    width: 97px;
    height: 23px;
    line-height: 24px;
    text-align: center;
    color: #000;
    border: solid #6d7a72;
    border-width: 0 1px;
    background: linear-gradient(#24385a, #9fa392 70%, #f4d65c);
    text-shadow: 0 0 5px #c5cbc0, 0 0 8px #c5cbc0;
}

.window-buttons {
    display: flex;
    align-self: flex-start;
    height: 18px;
    margin-left: auto;
    margin-right: 3px;
    border: 1px solid #c4ccd8;
    border-top: 0;
    border-radius: 0 0 5px 5px;
    overflow: hidden;
    background: linear-gradient(#8b96a8, #4a5669 50%, #707c90);
}

.window-buttons button {
    width: 28px;
    display: flex;
    align-items: center;
    justify-content: center;
    border-right: 1px solid #c4ccd8;
}

.window-buttons .close {
    width: 47px;
    border: 0;
    background: linear-gradient(#d9897c, #bb3420 50%, #cf5237);
}

/* Tabs */
.tabs {
    flex: none;
    display: flex;
    align-items: flex-end;
    gap: 1px;
    height: 23px;
    padding-left: 48px;
    background: #bfdbff;
}

.tab {
    height: 21px;
    padding: 0 14px;
}

.tab.active {
    padding: 0 11px;
    margin-right: 1px;
    border: 1px solid #8db2e3;
    border-bottom: 0;
    border-radius: 3px 3px 0 0;
    background: linear-gradient(#fff, #e3eefb 60%, #dbe7f6);
}

.tab.contextual {
    width: 97px;
    border: solid #a9c3e6;
    border-width: 0 1px;
}

.help {
    width: 14px;
    height: 14px;
    margin: 0 4px 4px auto;
    border: 1px solid #1b3fa0;
    border-radius: 50%;
    line-height: 11px;
    font-weight: bold;
    color: #fff;
    background: #2b62d9;
}

/* Ribbon */
.ribbon {
    position: relative;
    z-index: 2;
    flex: none;
    display: flex;
    gap: 3px;
    margin: 0 1px;
    padding: 2px 2px 3px;
    border: 1px solid #8db2e3;
    border-radius: 3px;
    background: linear-gradient(#dce8f6, #c8daee 22%, #cddef1 60%, #e0f1fd);
}

.group {
    position: relative;
    flex: none;
    display: flex;
    flex-direction: column;
    border: 1px solid #a3bfdf;
    border-radius: 3px;
    background: linear-gradient(#dfe9f5, #d0deef 20%, #c7d8ed 22%, #dae8f5 100%);
}

.clipboard { width: 98px; }
.slides { width: 171px; }
.font { width: 227px; }
.paragraph { width: 360px; }
.drawing { width: 405px; }
.editing { width: 107px; }

.group-body {
    flex: 1;
    display: flex;
    padding: 1px 4px 0;
}

.group footer {
    display: flex;
    align-items: center;
    height: 16px;
    line-height: 15px;
    color: #3e6aaa;
    background: #c1d8f1;
}

.group footer span {
    flex: 1;
    text-align: center;
}

.launcher {
    width: 8px;
    height: 8px;
    margin-right: 4px;
    border: solid #7f9cc8;
    border-width: 1px 0 0 1px;
    background: linear-gradient(135deg, transparent 60%, #6b8cbd 60%);
}

.big {
    display: flex;
    flex-direction: column;
    align-items: center;
    line-height: 13px;
    padding-top: 2px;
}

.big > span {
    margin-top: 4px;
}

.big > .caret {
    margin-top: 4px;
}

.clipboard .big {
    width: 64px;
}

.clipboard .stack {
    margin-left: -7px;
}

.slides .big {
    width: 68px;
    margin-right: 3px;
}

.stack {
    display: flex;
    flex-direction: column;
}

.stack button {
    display: flex;
    align-items: center;
    gap: 3px;
    height: 22px;
}

.rows {
    display: flex;
    flex-direction: column;
    gap: 7px;
    padding-top: 9px;
}

.row {
    display: flex;
    gap: 4px;
}

.combo {
    display: flex;
}

.combo select {
    appearance: none;
    height: 22px;
    padding: 0 2px;
    border: 1px solid #b0c8e6;
    border-radius: 0;
    font: inherit;
    color: #000;
    background: #eaf2fb url("data:image/svg+xml,%3Csvg xmlns='http://www.w3.org/2000/svg' width='6' height='4'%3E%3Cpath d='M0 0h6L3 3z' fill='%235577ab'/%3E%3C/svg%3E") no-repeat right 4px center;
}

.font-name { width: 103px; }
.font-size { width: 41px; }

.cluster {
    display: flex;
    height: 22px;
    border: 1px solid #9ab6da;
    border-radius: 2px;
    background: linear-gradient(#dbe7f5, #c8d9ee 45%, #bfd2ea 50%, #d3e2f4);
}

.cluster button {
    position: relative;
    display: flex;
    align-items: center;
    justify-content: center;
    width: 23px;
    border-left: 1px solid #b4cae6;
    color: #222;
}

.cluster button:first-child {
    border-left: 0;
}

.cluster.wide button {
    width: 32px;
    gap: 4px;
}

.cluster.wide .line-spacing {
    width: 28px;
    gap: 2px;
}

.muted button {
    width: 22px;
}

.cluster .pressed {
    background: linear-gradient(#f9c98b, #f5a742 45%, #ffe38a);
}

.serif {
    font-family: "Liberation Serif", serif;
    font-weight: bold;
}

.cluster .grow {
    width: 21px;
    font-size: 16px;
}

.cluster .shrink {
    width: 20px;
    font-size: 12px;
}

.cluster sup {
    font-size: 9px;
    line-height: 8px;
    align-self: flex-start;
    color: #3c6bb5;
}

.cluster .b,
.cluster .shadow {
    font-weight: 900;
    font-size: 12px;
    color: #000;
}

.cluster .shadow {
    text-shadow: 2px 2px 1px #888;
}

.cluster .i {
    font-style: italic;
    font-size: 14px;
}

.cluster .u {
    font-size: 14px;
    text-decoration: underline;
}

.cluster .strike {
    width: 25px;
    font-size: 12px;
    text-decoration: line-through;
}

.cluster .spacing {
    width: 31px;
    gap: 3px;
    font-size: 11px;
    padding-bottom: 5px;
}

.spacing svg {
    position: absolute;
    left: 4px;
    bottom: 3px;
}

.cluster .case {
    width: 30px;
    gap: 2px;
    font-size: 14px;
}

.cluster .color {
    width: 32px;
    gap: 7px;
    font-size: 15px;
    color: #34558f;
}

.color span {
    line-height: 13px;
    border-bottom: 4px solid #f00;
    padding: 0 2px;
}

.paragraph .group-body {
    padding-top: 0;
}

.paragraph .stack {
    padding-top: 1px;
    margin-left: 2px;
}

.drawing .group-body {
    justify-content: flex-end;
    padding-right: 6px;
}

.glyph {
    font: bold 8px "Liberation Serif", serif;
    fill: #1f355f;
}

.replace-icon {
    overflow: visible;
}

.swap {
    font: bold 7px "Liberation Sans", sans-serif;
    fill: #444;
}

.swap.green {
    fill: #2c8a2c;
}

.tiny {
    font: bold 6px "Liberation Sans", sans-serif;
}

/* Shape gallery */
.gallery {
    position: absolute;
    left: 3px;
    top: 3px;
    width: 261px;
    padding: 1px;
    border: 1px solid #868686;
    border-radius: 2px;
    background: #fafafa;
    box-shadow: 3px 3px 4px rgba(0, 0, 0, 0.4);
}

.gallery-main {
    display: flex;
}

.gallery-list {
    flex: none;
    width: 240px;
}

.gallery-list h2 {
    height: 20px;
    padding-left: 11px;
    border-bottom: 1px solid #c5c5c5;
    font-weight: bold;
    line-height: 19px;
    color: #00156e;
    background: #dde7ee;
}

.shape-grid {
    display: grid;
    grid-template-columns: repeat(12, 20px);
    grid-auto-rows: 20px;
}

.shape {
    display: flex;
    align-items: center;
    justify-content: center;
}

.shape.hover {
    border: 1px solid #e5c365;
    border-radius: 2px;
    background: linear-gradient(#fffbe6, #ffe9a6);
}

.f {
    fill: url(#shapeFill);
    stroke: #4f6e91;
}

.f.dark {
    stroke: #1f3352;
}

.dots {
    stroke-dasharray: 1 1;
}

.l {
    fill: none;
    stroke: #2c4067;
}

.o {
    fill: none;
    stroke: #4f6e91;
}

.h {
    fill: #2c4067;
}

.w {
    fill: #fafafa;
    stroke: #4f6e91;
}

.num {
    font: bold 7px "Liberation Sans", sans-serif;
    text-anchor: middle;
    fill: #1f355f;
}

.gallery-scroll,
.notes-scroll {
    display: flex;
    flex-direction: column;
    align-items: center;
    justify-content: space-between;
}

.gallery-scroll {
    flex: 1;
    padding: 6px 1px 6px 0;
    border-left: 1px solid #e4e4e4;
    background: #f0f0f0;
}

.up,
.down {
    border: 5px solid transparent;
}

.up {
    border-top: 0;
    border-bottom-color: #9aa5c8;
}

.down {
    border-bottom: 0;
    border-top-color: #9aa5c8;
}

.gallery-grip {
    display: flex;
    justify-content: flex-end;
    align-items: center;
    height: 11px;
    padding-right: 1px;
    border-top: 1px solid #dcdfe4;
    background: linear-gradient(#fdfdfd, #e6ebf1);
}

.tooltip {
    position: absolute;
    left: 56px;
    top: 158px;
    height: 24px;
    padding: 0 4px;
    border: 1px solid #767676;
    border-radius: 2px;
    line-height: 22px;
    white-space: nowrap;
    color: #4c4c4c;
    background: linear-gradient(#fff, #c9d9ef);
    box-shadow: 3px 3px 3px rgba(0, 0, 0, 0.35);
}

/* Workspace */
.workspace {
    position: relative;
    flex: 1;
    min-height: 0;
    display: flex;
    background: linear-gradient(#97b6e0, #88a9d8 25%, #6d94cc 45%, #567db3 72%, #5880b7 80%, #6690cb);
}

.swoosh {
    position: absolute;
    left: 0;
    top: 0;
    fill: rgba(200, 222, 250, 0.4);
}

.outline {
    position: relative;
    flex: none;
    width: 225px;
}

.outline-tabs {
    display: flex;
    height: 21px;
    border: 1px solid #6f9bd5;
    background: #bcd4f5;
}

.outline-tab {
    width: 90px;
    margin-left: -7px;
    padding-left: 8px;
    text-align: left;
    line-height: 18px;
    background: linear-gradient(to top right, transparent 44%, #6f9bd5 44%) right / 18% 100% no-repeat, linear-gradient(#c6dbf8, #a4c2ec);
    clip-path: polygon(0 0, 82% 0, 100% 100%, 0 100%);
}

.outline-tab.current {
    z-index: 1;
    margin-left: 0;
    padding-left: 7px;
    font-weight: bold;
    color: #00156e;
    background: linear-gradient(to top right, transparent 44%, #6f9bd5 44%) right / 18% 100% no-repeat, linear-gradient(#fff, #cfe0f8);
}

.outline-close {
    margin-left: auto;
    padding: 0 7px;
    font-weight: bold;
    color: #4a6fae;
}

.thumb {
    display: flex;
    margin: 4px 4px 0 3px;
    padding: 3px 4px 4px 3px;
    border: 1px solid #d47b34;
    background: linear-gradient(#fbd79f, #f6bd69 35%, #f2a43c 36%, #f09f33 85%, #f5ad50);
}

.thumb-number {
    width: 16px;
    padding: 3px 0 0 1px;
    font-weight: bold;
    color: #fff;
    text-shadow: 1px 1px 1px #555;
}

.thumb-slide {
    position: relative;
    flex: 1;
    aspect-ratio: 4 / 3;
    border: 1px solid #5e5e5e;
    background: #fff;
    box-shadow: 2px 2px 3px rgba(0, 0, 0, 0.5);
}

.thumb-shape,
.selection {
    position: absolute;
    left: 8.2%;
    top: 26.7%;
    width: 40.3%;
    height: 35%;
    background: #4f81bd;
}

.thumb-shape {
    left: 9%;
    border: 1px solid #385d8a;
}

.editor {
    position: relative;
    flex: 1;
    min-width: 0;
    display: flex;
    flex-direction: column;
    border-left: 5px solid #a9cbf7;
}

.canvas {
    flex: 1;
    min-height: 0;
    display: flex;
    justify-content: center;
    padding: 16px 0 15px;
}

.slide {
    position: relative;
    height: 100%;
    aspect-ratio: 4 / 3;
    background: #fff;
    box-shadow: 2px 2px 5px rgba(20, 40, 80, 0.7);
}

.selection {
    box-shadow: inset 2px 1px #385d8a, inset -1px -3px #385d8a;
}

.handle {
    position: absolute;
    width: 8px;
    height: 8px;
    border: 1px solid #50718f;
    background: #dff3f8;
    transform: translate(-50%, -50%);
}

.handle.round,
.handle.rotate {
    width: 10px;
    height: 10px;
    border-color: #48606e;
    border-radius: 50%;
}

.handle.rotate {
    left: 50%;
    top: -24px;
    background: #8fe04a;
}

.stem {
    position: absolute;
    left: 50%;
    top: -20px;
    width: 1px;
    height: 20px;
    background: #4f71a5;
}

.nw { left: 0; top: 0; }
.north { left: 50%; top: 0; }
.ne { left: 100%; top: 0; }
.west { left: 0; top: 50%; }
.east { left: 100%; top: 50%; }
.sw { left: 0; top: 100%; }
.south { left: 50%; top: 100%; }
.se { left: 100%; top: 100%; }

.notes {
    flex: none;
    display: flex;
    border-top: 5px solid #a9cbf7;
}

.notes textarea {
    flex: 1;
    height: 38px;
    padding: 5px 9px;
    border: 1px solid #7ea0cf;
    border-right: 0;
    resize: none;
    overflow: hidden;
    font: 15px/20px "Noto Sans", sans-serif;
    color: #000;
    background: #fff;
}

.notes-scroll {
    width: 15px;
    padding: 6px 0 5px;
    background: #86a7d6;
}

.notes-scroll .up {
    border-bottom-color: #5c7db0;
}

.notes-scroll .down {
    border-top-color: #5c7db0;
}

/* Status bar */
.statusbar {
    flex: none;
    display: flex;
    align-items: stretch;
    height: 23px;
    line-height: 20px;
    border-top: 1px solid #567db0;
    color: #1b3672;
    background: linear-gradient(#e3efff, #c4dbfb 40%, #a9caf7 45%, #c9dffc 90%, #eaf3ff);
}

.status-item {
    display: flex;
    align-items: center;
    padding: 0 5px 2px 10px;
    border-right: 1px solid #8fb0de;
}

.status-item:first-child {
    padding-left: 8px;
}

.language {
    gap: 14px;
}

.view-tools {
    display: flex;
    align-items: center;
    margin-left: auto;
    padding: 0 5px 1px 4px;
    border-left: 1px solid #7d9fd0;
    background: linear-gradient(#c1d8f8, #90b4e8 50%, #7ea5de 55%, #a0c0ee);
}

.views {
    display: flex;
    border: 1px solid #6f92c8;
    border-radius: 2px;
}

.views button {
    display: flex;
    align-items: center;
    justify-content: center;
    width: 18px;
    height: 16px;
    background: #c6daf6;
}

.views .pressed {
    background: #fbcf7f;
}

.zoom-value {
    margin: 0 9px 0 8px;
}

.zoom-range {
    appearance: none;
    width: 102px;
    height: 16px;
    margin: 0;
    background: linear-gradient(#fff, #fff) center / 100% 1px no-repeat;
}

.zoom-range::-webkit-slider-thumb {
    appearance: none;
    width: 10px;
    height: 14px;
    background: url("data:image/svg+xml,%3Csvg xmlns='http://www.w3.org/2000/svg' width='10' height='14'%3E%3Cpath d='M.5.5h9v8.500l-4.500 4-4.500-4z' fill='%23e8f0fb' stroke='%23496aa0'/%3E%3Cpath d='M5 3v6' stroke='%23496aa0'/%3E%3C/svg%3E") no-repeat;
}

.fit {
    margin-left: 9px;
}

/* Taskbar */
.taskbar {
    flex: none;
    display: flex;
    align-items: center;
    height: 39px;
    padding-left: 8px;
    border-top: 1px solid #6d7f96;
    background: radial-gradient(ellipse 16px 26px at 645px 10px, rgba(200, 190, 180, 0.4), transparent), linear-gradient(105deg, #05080e 0, #0b111b 9%, #0d1624 10%, #4d7096 13%, #3a5b85 22%, #2c4a75 32%, #35557f 43%, #2a4a74 55%, #1a3052 72%, #131f33 86%, #111a2b);
}

.task {
    display: flex;
    align-items: center;
    justify-content: center;
    width: 58px;
    height: 38px;
    margin-right: 4px;
}

.start {
    margin-right: 12px;
}

.task.open {
    border: 1px solid #8295ab;
    border-radius: 2px;
    background: linear-gradient(135deg, #8296ad, #4a627f 50%, #3d5877);
}

.task.open.active {
    border-color: #dde6f0;
    background: linear-gradient(135deg, #c9d3de, #8d9eb3 50%, #7f93ab);
}

.tray {
    display: flex;
    align-items: center;
    gap: 8px;
    margin-left: auto;
    color: #fff;
}

.tray .lang {
    margin-right: 4px;
    font-size: 12px;
    line-height: 20px;
    padding-bottom: 5px;
}

.clock {
    width: 82px;
    margin-left: 6px;
    text-align: center;
    font-size: 11px;
    line-height: 17px;
    color: #fff;
}

.show-desktop {
    width: 13px;
    height: 38px;
    margin-right: 2px;
    border: 1px solid #5f6f85;
    background: linear-gradient(#5d6a7c, #1d2838 50%, #2b3748);
}

.defs {
    position: absolute;
}
```
